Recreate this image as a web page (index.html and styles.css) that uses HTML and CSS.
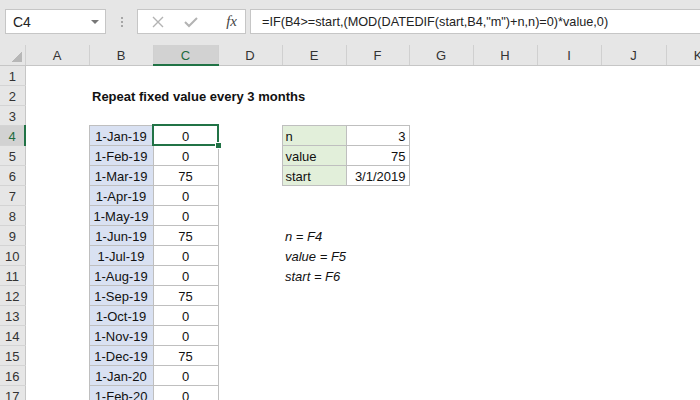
FILE: index.html
```html
<!DOCTYPE html>
<html>
<head>
    <title>Repeat fixed value every 3 months</title>
    <link rel="stylesheet" href="styles.css">
</head>
<body>
    <!-- Name box and formula bar -->
    <div class="toolbar">
        <div class="name-box">
            <span>C4</span>
            <span class="drop"></span>
        </div>
        <div class="grip"><i></i><i></i><i></i></div>
        <div class="fx-buttons">
            <svg width="14" height="14" viewBox="0 0 14 14"><path d="M2 2 L12 12 M12 2 L2 12" stroke="#b3b3b3" stroke-width="1.4" fill="none"/></svg>
            <svg width="16" height="14" viewBox="0 0 16 14"><path d="M2 7 L6 11 L14 3" stroke="#b3b3b3" stroke-width="2" fill="none"/></svg>
            <span class="fx">fx</span>
        </div>
        <div class="formula">=IF(B4&gt;=start,(MOD(DATEDIF(start,B4,"m")+n,n)=0)*value,0)</div>
    </div>

    <table class="sheet">
        <colgroup>
            <col class="c-corner"><col class="c64"><col class="c64"><col class="c65"><col class="c64"><col class="c64">
            <col class="c63"><col class="c64"><col class="c64"><col class="c64"><col class="c65"><col class="c64">
        </colgroup>
        <tr class="head">
            <th class="corner"><span class="tri"></span></th>
            <th>A</th><th>B</th><th class="sel">C</th><th>D</th><th>E</th><th>F</th><th>G</th><th>H</th><th>I</th><th>J</th><th>K</th>
        </tr>
        <tr><th>1</th><td></td><td></td><td></td><td></td><td></td><td></td><td></td><td></td><td></td><td></td><td></td></tr>
        <tr><th>2</th><td></td><td class="title" colspan="4">Repeat fixed value every 3 months</td><td></td><td></td><td></td><td></td><td></td><td></td></tr>
        <tr><th>3</th><td></td><td></td><td></td><td></td><td></td><td></td><td></td><td></td><td></td><td></td><td></td></tr>
        <tr><th class="sel">4</th><td></td><td class="date">1-Jan-19</td><td class="num active">0</td><td></td><td class="key">n</td><td class="val">3</td><td></td><td></td><td></td><td></td><td></td></tr>
        <tr><th>5</th><td></td><td class="date">1-Feb-19</td><td class="num">0</td><td></td><td class="key">value</td><td class="val">75</td><td></td><td></td><td></td><td></td><td></td></tr>
        <tr><th>6</th><td></td><td class="date">1-Mar-19</td><td class="num">75</td><td></td><td class="key">start</td><td class="val">3/1/2019</td><td></td><td></td><td></td><td></td><td></td></tr>
        <tr><th>7</th><td></td><td class="date">1-Apr-19</td><td class="num">0</td><td></td><td></td><td></td><td></td><td></td><td></td><td></td><td></td></tr>
        <tr><th>8</th><td></td><td class="date">1-May-19</td><td class="num">0</td><td></td><td></td><td></td><td></td><td></td><td></td><td></td><td></td></tr>
        <tr><th>9</th><td></td><td class="date">1-Jun-19</td><td class="num">75</td><td></td><td class="note" colspan="2">n = F4</td><td></td><td></td><td></td><td></td><td></td></tr>
        <tr><th>10</th><td></td><td class="date">1-Jul-19</td><td class="num">0</td><td></td><td class="note" colspan="2">value = F5</td><td></td><td></td><td></td><td></td><td></td></tr>
        <tr><th>11</th><td></td><td class="date">1-Aug-19</td><td class="num">0</td><td></td><td class="note" colspan="2">start = F6</td><td></td><td></td><td></td><td></td><td></td></tr>
        <tr><th>12</th><td></td><td class="date">1-Sep-19</td><td class="num">75</td><td></td><td></td><td></td><td></td><td></td><td></td><td></td><td></td></tr>
        <tr><th>13</th><td></td><td class="date">1-Oct-19</td><td class="num">0</td><td></td><td></td><td></td><td></td><td></td><td></td><td></td><td></td></tr>
        <tr><th>14</th><td></td><td class="date">1-Nov-19</td><td class="num">0</td><td></td><td></td><td></td><td></td><td></td><td></td><td></td><td></td></tr>
        <tr><th>15</th><td></td><td class="date">1-Dec-19</td><td class="num">75</td><td></td><td></td><td></td><td></td><td></td><td></td><td></td><td></td></tr>
        <tr><th>16</th><td></td><td class="date">1-Jan-20</td><td class="num">0</td><td></td><td></td><td></td><td></td><td></td><td></td><td></td><td></td></tr>
        <tr><th>17</th><td></td><td class="date">1-Feb-20</td><td class="num">0</td><td></td><td></td><td></td><td></td><td></td><td></td><td></td><td></td></tr>
    </table>
</body>
</html>
```

FILE: styles.css
```css
body {
    margin: 0;
    font-family: "Liberation Sans", Arial, sans-serif;
    background: #fff;
    overflow: hidden;
}
.toolbar {
    height: 45px;
    background: #e6e6e6;
    display: flex;
    align-items: flex-start;
    padding-top: 9px;
    box-sizing: border-box;
}
.name-box {
    margin-left: 5px;
    width: 101px;
    height: 25px;
    box-sizing: border-box;
    background: #fff;
    border: 1px solid #c6c6c6;
    display: flex;
    align-items: center;
    justify-content: space-between;
    padding: 0 6px 0 7px;
    font-size: 14px;
    color: #222;
}
.drop {
    width: 0;
    height: 0;
    border-left: 4px solid transparent;
    border-right: 4px solid transparent;
    border-top: 4px solid #777;
}
.grip {
    width: 31px;
    height: 25px;
    display: flex;
    flex-direction: column;
    align-items: center;
    justify-content: center;
    gap: 2px;
}
.grip i {
    width: 2px;
    height: 2px;
    background: #a6a6a6;
}
.fx-buttons {
    width: 109px;
    height: 25px;
    box-sizing: border-box;
    background: #fff;
    border: 1px solid #c6c6c6;
    display: flex;
    align-items: center;
    padding: 0 8px 0 13px;
    gap: 18px;
}
.fx {
    margin-left: auto;
    font-family: "Liberation Serif", serif;
    font-style: italic;
    font-size: 15px;
    color: #444;
}
.formula {
    margin-left: 4px;
    flex: 1;
    height: 25px;
    box-sizing: border-box;
    background: #fff;
    border: 1px solid #c6c6c6;
    border-right: none;
    padding-left: 11px;
    line-height: 24px;
    font-size: 12.7px;
    color: #222;
    white-space: nowrap;
}
.sheet {
    border-collapse: collapse;
    table-layout: fixed;
    width: 729px;
    font-size: 13px;
    color: #111;
}
.c-corner { width: 25px; }
.c63 { width: 63px; }
.c64 { width: 64px; }
.c65 { width: 65px; }
.sheet tr { height: 20px; }
.sheet th,
.sheet td {
    padding: 2px 3px 0;
    line-height: 17px;
    white-space: nowrap;
    overflow: visible;
}
.sheet th {
    background: #e6e6e6;
    font-weight: normal;
    color: #333;
    font-size: 13px;
    border-bottom: 1px solid #d4d4d4;
    border-right: 1px solid #c6c6c6;
}
.head { height: 19px; }
.head th {
    padding-top: 1px;
    border-right: 1px solid #d0d0d0;
    border-bottom: 1px solid #c6c6c6;
}
.sheet th.sel {
    background: #d2d2d2;
    color: #1e6b3e;
}
.head th.sel {
    border-bottom: 2px solid #217346;
}
.sheet tr th.sel:first-child {
    border-right: 2px solid #217346;
}
.corner {
    position: relative;
}
.tri {
    position: absolute;
    right: 3px;
    bottom: 3px;
    width: 11px;
    height: 11px;
    background: linear-gradient(135deg, transparent 50%, #b7b7b7 50%);
}
.title {
    font-weight: bold;
    padding-left: 4px;
}
.date {
    background: #d9e1f2;
    text-align: center;
    border: 1px solid #bfbfbf;
}
.num {
    text-align: center;
    border: 1px solid #bfbfbf;
}
.key {
    background: #e2efda;
    border: 1px solid #bfbfbf;
}
.val {
    text-align: right;
    border: 1px solid #bfbfbf;
}
.note {
    font-style: italic;
}
.active {
    position: relative;
    outline: 2px solid #217346;
    outline-offset: -1px;
}
.active::after {
    content: "";
    position: absolute;
    right: -4px;
    bottom: -4px;
    width: 5px;
    height: 5px;
    background: #217346;
    border: 1px solid #fff;
}
```
